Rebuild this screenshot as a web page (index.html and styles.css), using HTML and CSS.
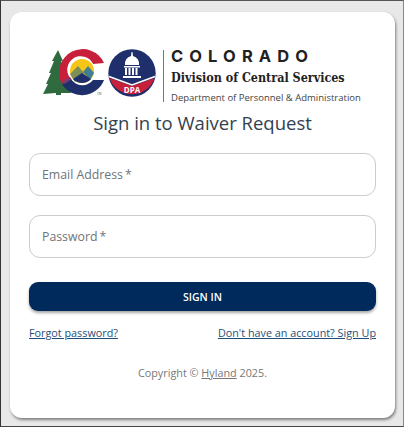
FILE: index.html
```html
<!DOCTYPE html>
<html lang="en">
<head>
    <meta charset="utf-8">
    <title>Sign in to Waiver Request</title>
    <meta name="viewport" content="width=device-width, initial-scale=1">
    <link rel="stylesheet" href="styles.css">
</head>
<body>
    <div class="frame">
        <div class="card">
            <div class="logo">
                <svg class="logo-marks" width="114" height="56" viewBox="0 0 114 56">
                    <!-- tree -->
                    <path fill="#2f6b3f" d="M15 2 L20 13 L18 13 L23 24 L21 24 L25 35 L23 35 L28 45 L18 45 L18 47 L13 47 L13 45 L0 46 L5 36 L3 36 L8 25 L6 25 L11 13 L9 13 Z"/>
                    <!-- C -->
                    <path fill="#c8203a" d="M61 15 A23.5 23.5 0 1 0 19 36 L28 31 A13.5 13.5 0 1 1 50 16 Z"/>
                    <path fill="#1f2f6b" d="M19 36 A23.5 23.5 0 0 0 61 32 L50 32 A13.5 13.5 0 0 1 28 31 Z"/>
                    <path fill="none" stroke="#7a3a6a" stroke-width="3" d="M20 35 L28 30"/>
                    <circle cx="39" cy="23" r="13" fill="#fff"/>
                    <circle cx="39" cy="23" r="12" fill="#f5c518"/>
                    <path fill="#7d8f55" d="M27 26 L35 18 L41 25 L32 34 Z"/>
                    <path fill="#3f7f94" d="M40 24 L45 18 L51 25 L47 32 Z"/>
                    <path fill="#1f2f6b" d="M30 31 L39 25 L48 31 A12 12 0 0 1 30 31 Z"/>
                    <!-- DPA seal -->
                    <circle cx="89" cy="25" r="23.7" fill="#1f2f6b"/>
                    <path fill="#c8203a" d="M66.5 30 L89 38 L111.5 30 A23.7 23.7 0 0 1 66.5 30 Z"/>
                    <path fill="none" stroke="#fff" stroke-width="1.6" d="M66 28.5 L89 37 L112 28.5"/>
                    <path fill="#fff" d="M88.5 4 h1 l.5 4 A8 8 0 0 1 96 17 L82 17 A8 8 0 0 1 88 8 Z"/>
                    <rect x="81" y="18" width="16" height="1.5" fill="#fff"/>
                    <path fill="#fff" d="M82 20 h2 v7 h-2 Z M85.5 20 h2 v7 h-2 Z M89 20 h2 v7 h-2 Z M92.5 20 h2 v7 h-2 Z"/>
                    <rect x="80" y="28" width="18" height="2" fill="#fff"/>
                    <text class="seal-text" x="89" y="45" text-anchor="middle">DPA</text>
                    <text class="tm-text" x="54" y="47">TM</text>
                </svg>
                <div class="logo-text">
                    <div class="state">COLORADO</div>
                    <div class="division">Division of Central Services</div>
                    <div class="department">Department of Personnel &amp; Administration</div>
                </div>
            </div>
            <h1 class="title">Sign in to Waiver Request</h1>
            <form class="form">
                <div class="field">Email Address<span class="req">*</span></div>
                <div class="field">Password<span class="req">*</span></div>
                <button class="submit" type="button">SIGN IN</button>
            </form>
            <div class="links">
                <a href="#">Forgot password?</a>
                <a href="#">Don't have an account? Sign Up</a>
            </div>
            <div class="copyright">Copyright © <a href="#">Hyland</a> 2025.</div>
        </div>
    </div>
</body>
</html>
```

FILE: styles.css
```css
html, body {
    margin: 0;
    height: 100%;
}
body {
    font-family: 'Open Sans', 'Liberation Sans', sans-serif;
    overflow: hidden;
}
.frame {
    box-sizing: border-box;
    width: 404px;
    height: 427px;
    padding: 11px 8px 8px 9px;
    background: #e8e8e8;
    border-top: 1px solid #555;
    border-left: 1px solid #333;
    border-right: 1px solid #888;
    border-bottom: 1px solid #444;
}
.card {
    box-sizing: border-box;
    height: 406px;
    padding: 36px 19px 0 19px;
    background: #fff;
    border-radius: 12px;
    box-shadow: 1px 2px 3px rgba(0, 0, 0, 0.45);
}
.logo {
    display: flex;
    align-items: flex-start;
    padding-left: 14px;
    height: 56px;
}
.logo-marks {
    flex: none;
}
.seal-text {
    font-family: 'Open Sans', sans-serif;
    font-size: 8px;
    font-weight: 700;
    fill: #fff;
}
.tm-text {
    font-family: 'Open Sans', sans-serif;
    font-size: 3px;
    fill: #555;
}
.logo-text {
    margin: 2px 0 0 6px;
    padding-left: 7px;
    border-left: 1px solid #777;
    height: 52px;
    color: #222;
}
.state {
    font-family: 'Inter', 'Open Sans', sans-serif;
    font-size: 16.5px;
    font-weight: 700;
    letter-spacing: 6.1px;
    line-height: 12px;
    white-space: nowrap;
}
.division {
    font-family: 'DejaVu Serif', serif;
    font-stretch: condensed;
    font-size: 12.45px;
    font-weight: 700;
    line-height: 18px;
    margin-top: 7px;
    white-space: nowrap;
}
.department {
    font-size: 9.5px;
    line-height: 14px;
    margin-top: 4px;
    color: #444;
    white-space: nowrap;
}
.title {
    margin: 5px 0 0;
    font-size: 18.5px;
    font-weight: 400;
    line-height: 28px;
    color: #33414f;
    text-align: center;
}
.form {
    display: flex;
    flex-direction: column;
    margin-top: 16px;
}
.field {
    box-sizing: border-box;
    height: 43px;
    padding: 0 12px;
    margin-bottom: 19px;
    display: flex;
    align-items: center;
    border: 1px solid #ccc;
    border-radius: 11px;
    font-size: 12.3px;
    color: #6f7479;
}
.req {
    margin-left: 2px;
}
.submit {
    height: 29px;
    margin-top: 5px;
    border: none;
    border-radius: 9px;
    background: #002a5c;
    color: #fff;
    font-family: inherit;
    font-size: 10.5px;
    font-weight: 600;
    box-shadow: 0 2px 3px rgba(0, 0, 0, 0.35);
}
.links {
    display: flex;
    justify-content: space-between;
    margin-top: 14px;
    font-size: 10.8px;
    line-height: 16px;
}
.links a {
    color: #1f4e79;
}
.copyright {
    margin-top: 24px;
    text-align: center;
    font-size: 10.8px;
    line-height: 16px;
    color: #777;
}
.copyright a {
    color: #777;
}
```
